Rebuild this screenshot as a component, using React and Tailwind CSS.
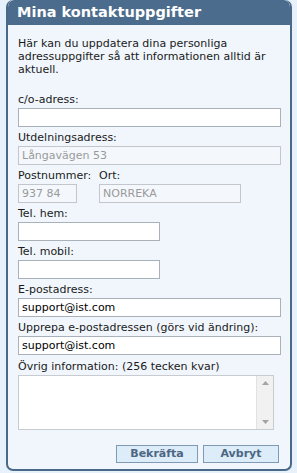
import { useState } from "react";

const font = { fontFamily: '"DejaVu Sans", Verdana, sans-serif' };

function Field({ label, children }) {
  return (
    <div className="h-[38px] shrink-0">
      <div className="leading-[14px] h-[14px]">{label}</div>
      {children}
    </div>
  );
}

function TextInput({ value, onChange, disabled, className }) {
  return (
    <input
      type="text"
      value={value}
      disabled={disabled}
      onChange={(e) => onChange && onChange(e.target.value)}
      className={
        "block h-[19px] px-[3px] text-[11px] outline-none border " +
        (disabled
          ? "bg-[#f4f8fc] border-[#c3c7cc] text-[#9a9a9a] "
          : "bg-white border-[#a9b1ba] text-black ") +
        className
      }
    />
  );
}

export default function App() {
  const [co, setCo] = useState("");
  const [telHem, setTelHem] = useState("");
  const [telMobil, setTelMobil] = useState("");
  const [email, setEmail] = useState("support@ist.com");
  const [email2, setEmail2] = useState("support@ist.com");
  const [info, setInfo] = useState("");

  return (
    <div style={font} className="w-[297px] h-[473px] bg-[#e6f1fb] pl-[6px] pr-[5px] pb-[2px] text-[11px] text-[#1a1a1a]">
      <div className="h-full flex flex-col rounded-[7px] border-2 border-t-0 border-[#4a6989] bg-[#f0f6fc] overflow-hidden">
        <div className="h-[25px] bg-[#4c6c8d] rounded-t-[6px] text-white font-bold text-[14.5px] leading-[25px] pl-[9px] shrink-0">
          Mina kontaktuppgifter
        </div>
        <div className="pl-[10px] pr-[10px] pt-[12px] flex-1 flex flex-col">
          <p className="leading-[13px] h-[56px] shrink-0">
            Här kan du uppdatera dina personliga adressuppgifter så att informationen alltid är aktuell.
          </p>

          <Field label="c/o-adress:">
            <TextInput value={co} onChange={setCo} className="w-[263px] mt-[1px]" />
          </Field>
          <Field label="Utdelningsadress:">
            <TextInput value="Långavägen 53" disabled className="w-[263px] mt-[1px]" />
          </Field>
          <div className="h-[38px] shrink-0">
            <div className="flex leading-[14px] h-[14px]">
              <span className="w-[81px]">Postnummer:</span>
              <span>Ort:</span>
            </div>
            <div className="flex mt-[1px] gap-[22px]">
              <TextInput value="937 84" disabled className="w-[59px]" />
              <TextInput value="NORREKA" disabled className="w-[142px]" />
            </div>
          </div>
          <Field label="Tel. hem:">
            <TextInput value={telHem} onChange={setTelHem} className="w-[142px] mt-[1px]" />
          </Field>
          <Field label="Tel. mobil:">
            <TextInput value={telMobil} onChange={setTelMobil} className="w-[142px] mt-[1px]" />
          </Field>
          <Field label="E-postadress:">
            <TextInput value={email} onChange={setEmail} className="w-[263px] mt-[1px]" />
          </Field>
          <Field label="Upprepa e-postadressen (görs vid ändring):">
            <TextInput value={email2} onChange={setEmail2} className="w-[263px] mt-[1px]" />
          </Field>
          <div className="mt-[1px]">
            <div className="leading-[14px] h-[14px]">Övrig information: (256 tecken kvar)</div>
            <div className="mt-[1px] w-[256px] h-[55px] flex border border-[#c8ccd1] bg-white">
              <textarea
                value={info}
                onChange={(e) => setInfo(e.target.value)}
                className="flex-1 resize-none outline-none text-[11px] px-[3px] bg-white"
              />
              <div className="w-[17px] bg-[#f1f1f1] border-l border-[#e2e2e2] flex flex-col justify-between items-center py-[5px]">
                <svg width="7" height="4" viewBox="0 0 7 4">
                  <path d="M0 4 L3.5 0 L7 4 Z" fill="#a3a3a3" />
                </svg>
                <svg width="7" height="4" viewBox="0 0 7 4">
                  <path d="M0 0 L3.5 4 L7 0 Z" fill="#a3a3a3" />
                </svg>
              </div>
            </div>
          </div>

          <div className="mt-auto mb-[6px] flex justify-end gap-[5px] pr-[1px]">
            <button className="w-[82px] h-[18px] border border-[#7f9ab4] bg-[#dcecf9] text-[#4d6682] font-bold text-[11px] leading-[16px]">
              Bekräfta
            </button>
            <button className="w-[76px] h-[18px] border border-[#7f9ab4] bg-[#dcecf9] text-[#4d6682] font-bold text-[11px] leading-[16px]">
              Avbryt
            </button>
          </div>
        </div>
      </div>
    </div>
  );
}
